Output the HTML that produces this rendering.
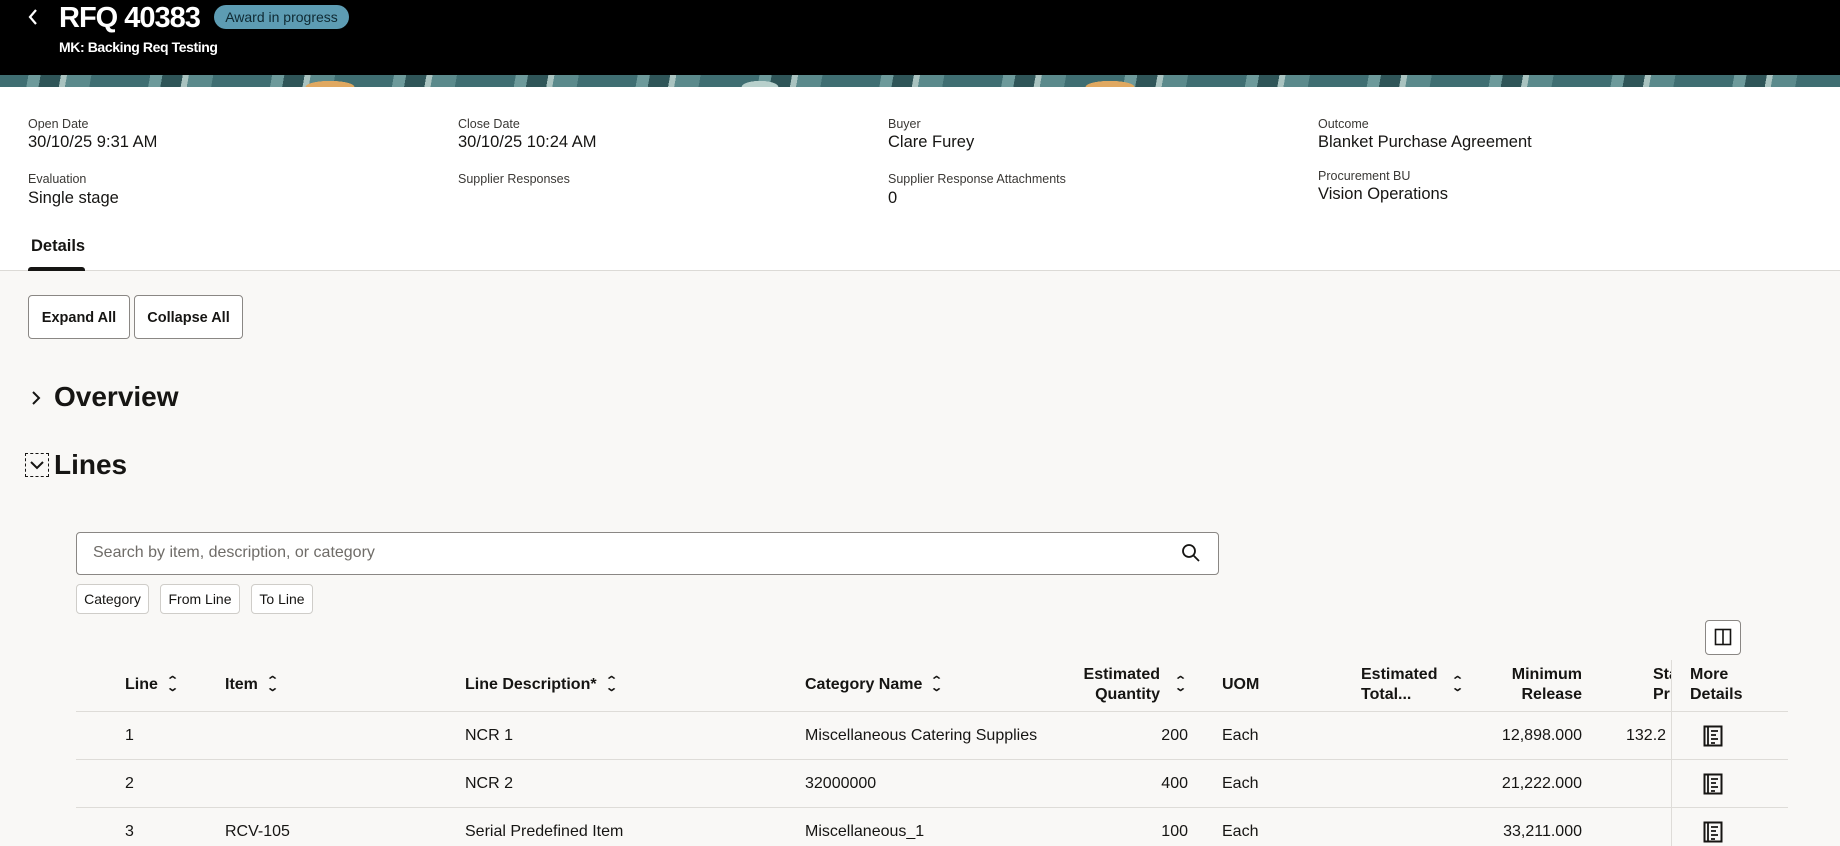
<!DOCTYPE html>
<html><head><meta charset="utf-8"><style>
*{box-sizing:border-box;margin:0;padding:0}
body{width:1840px;height:846px;overflow:hidden;background:#f9f8f6;font-family:"Liberation Sans",sans-serif;color:#161513;position:relative}
.a{position:absolute;white-space:nowrap}
.hdr{position:absolute;left:0;top:0;width:1840px;height:75px;background:#000}
.ban{position:absolute;left:0;top:75px;width:1840px;height:12px;background:
radial-gradient(ellipse 40px 10px at 330px 12px,#e0a860 60%,transparent 62%),
radial-gradient(ellipse 40px 10px at 1110px 12px,#e0a860 60%,transparent 62%),
radial-gradient(ellipse 30px 10px at 760px 12px,#b8d0cc 60%,transparent 62%),
repeating-linear-gradient(100deg,#3f6e72 0 28px,#6d9a9b 28px 40px,#2f5558 40px 60px,#a9c3c0 60px 66px,#5b8a8c 66px 90px,#3f6e72 90px 120px);}
.white{position:absolute;left:0;top:87px;width:1840px;height:184px;background:#fff;border-bottom:1px solid #dcdad6}
.lb{font-size:12.5px;color:#3a3835}
.vl{font-size:16.5px;color:#161513}
.btn{position:absolute;border:1px solid #8a8784;border-radius:4px;background:#fff;font-size:14.5px;font-weight:600;display:flex;align-items:center;justify-content:center;top:295px;height:44px;padding-top:1px}
.chip{position:absolute;top:584px;height:30px;border:1px solid #cfcdc9;border-radius:4px;background:#fff;font-size:14px;display:flex;align-items:center;justify-content:center}
.th{font-size:16px;font-weight:600;line-height:20px}
.td{font-size:16px}
.hl{position:absolute;left:76px;width:1712px;height:1px;background:#dedcd8}
.srt{display:inline-block;font-size:11px;line-height:7px;vertical-align:middle;margin-left:10px;transform:scaleX(1.4)}
</style></head><body>
<div class="hdr"></div>
<svg class="a" style="left:26px;top:8px" width="14" height="18" viewBox="0 0 14 18"><path d="M10 2 L4 9 L10 16" fill="none" stroke="#fff" stroke-width="2.2"/></svg>
<div class="a" style="left:59px;top:1px;font-size:29px;font-weight:700;color:#fff;line-height:34px;letter-spacing:-1px">RFQ 40383</div>
<div class="a" style="left:214px;top:5px;width:135px;height:24px;border-radius:12px;background:#5d9cb3;color:#0f2a33;font-size:14px;line-height:24px;text-align:center">Award in progress</div>
<div class="a" style="left:59px;top:39px;font-size:14px;font-weight:700;color:#fff;letter-spacing:-0.4px">MK: Backing Req Testing</div>
<div class="ban"></div>
<div class="white"></div>
<div class="a lb" style="left:28px;top:117px">Open Date</div>
<div class="a vl" style="left:28px;top:133px">30/10/25 9:31 AM</div>
<div class="a lb" style="left:458px;top:117px">Close Date</div>
<div class="a vl" style="left:458px;top:133px">30/10/25 10:24 AM</div>
<div class="a lb" style="left:888px;top:117px">Buyer</div>
<div class="a vl" style="left:888px;top:133px">Clare Furey</div>
<div class="a lb" style="left:1318px;top:117px">Outcome</div>
<div class="a vl" style="left:1318px;top:133px">Blanket Purchase Agreement</div>
<div class="a lb" style="left:28px;top:172px">Evaluation</div>
<div class="a vl" style="left:28px;top:189px">Single stage</div>
<div class="a lb" style="left:458px;top:172px">Supplier Responses</div>
<div class="a lb" style="left:888px;top:172px">Supplier Response Attachments</div>
<div class="a vl" style="left:888px;top:189px">0</div>
<div class="a lb" style="left:1318px;top:169px">Procurement BU</div>
<div class="a vl" style="left:1318px;top:185px">Vision Operations</div>
<div class="a" style="left:31px;top:237px;font-size:16.5px;font-weight:600">Details</div>
<div class="a" style="left:28px;top:267px;width:57px;height:4px;background:#161513;border-radius:3px 3px 0 0"></div>
<div class="btn" style="left:28px;width:102px">Expand All</div>
<div class="btn" style="left:134px;width:109px">Collapse All</div>
<svg class="a" style="left:30px;top:390px" width="12" height="16"><path d="M3 2 L9 8 L3 14" fill="none" stroke="#161513" stroke-width="2"/></svg>
<div class="a" style="left:54px;top:381px;font-size:28px;font-weight:700">Overview</div>
<div class="a" style="left:25px;top:453px;width:24px;height:24px;border:1px dashed #161513"></div>
<svg class="a" style="left:29px;top:459px" width="16" height="12"><path d="M2 3 L8 9 L14 3" fill="none" stroke="#161513" stroke-width="2"/></svg>
<div class="a" style="left:54px;top:449px;font-size:28px;font-weight:700">Lines</div>
<div class="a" style="left:76px;top:532px;width:1143px;height:43px;border:1px solid #8a8784;border-radius:4px;background:#fff"></div>
<div class="a" style="left:93px;top:544px;font-size:16px;color:#6f6c68">Search by item, description, or category</div>
<svg class="a" style="left:1181px;top:543px" width="20" height="20"><circle cx="8" cy="8" r="6" fill="none" stroke="#161513" stroke-width="1.8"/><path d="M12.5 12.5 L18 18" stroke="#161513" stroke-width="1.8"/></svg>
<div class="chip" style="left:76px;width:73px">Category</div>
<div class="chip" style="left:160px;width:80px">From Line</div>
<div class="chip" style="left:251px;width:62px">To Line</div>
<div class="a" style="left:1705px;top:620px;width:36px;height:35px;border:1px solid #8a8784;border-radius:4px;background:#fff"></div>
<svg class="a" style="left:1714px;top:628px" width="18" height="18"><rect x="1.5" y="1.5" width="15" height="15" fill="none" stroke="#161513" stroke-width="1.6"/><path d="M9 1.5 V16.5" stroke="#161513" stroke-width="1.6"/></svg>
<div class="a th" style="left:125px;top:675px">Line<span class="srt">⌃<br>⌄</span></div>
<div class="a th" style="left:225px;top:675px">Item<span class="srt">⌃<br>⌄</span></div>
<div class="a th" style="left:465px;top:675px">Line Description*<span class="srt">⌃<br>⌄</span></div>
<div class="a th" style="left:805px;top:675px">Category Name<span class="srt">⌃<br>⌄</span></div>
<div class="a th" style="left:1080px;top:665px;text-align:right;width:80px">Estimated<br>Quantity</div>
<div class="a th" style="left:1166px;top:675px"><span class="srt">⌃<br>⌄</span></div>
<div class="a th" style="left:1222px;top:675px">UOM</div>
<div class="a th" style="left:1361px;top:665px">Estimated<br>Total...</div>
<div class="a th" style="left:1443px;top:675px"><span class="srt">⌃<br>⌄</span></div>
<div class="a th" style="left:1482px;top:665px;text-align:right;width:100px">Minimum<br>Release</div>
<div class="a th" style="left:1653px;top:665px;width:18px;overflow:hidden">Sta<br>Pri</div>
<div class="a th" style="left:1690px;top:665px">More<br>Details</div>
<div class="a" style="left:1671px;top:660px;width:1px;height:186px;background:#dedcd8"></div>
<div class="hl" style="top:711px"></div>
<div class="hl" style="top:759px"></div>
<div class="hl" style="top:807px"></div>
<div class="a td" style="left:125px;top:727px">1</div>
<div class="a td" style="left:465px;top:727px">NCR 1</div>
<div class="a td" style="left:805px;top:727px">Miscellaneous Catering Supplies</div>
<div class="a td" style="left:1100px;top:727px;width:88px;text-align:right">200</div>
<div class="a td" style="left:1222px;top:727px">Each</div>
<div class="a td" style="left:1482px;top:727px;width:100px;text-align:right">12,898.000</div>
<div class="a td" style="left:1626px;top:727px;width:45px;overflow:hidden">132.2</div>
<div class="a td" style="left:125px;top:775px">2</div>
<div class="a td" style="left:465px;top:775px">NCR 2</div>
<div class="a td" style="left:805px;top:775px">32000000</div>
<div class="a td" style="left:1100px;top:775px;width:88px;text-align:right">400</div>
<div class="a td" style="left:1222px;top:775px">Each</div>
<div class="a td" style="left:1482px;top:775px;width:100px;text-align:right">21,222.000</div>
<div class="a td" style="left:125px;top:823px">3</div>
<div class="a td" style="left:225px;top:823px">RCV-105</div>
<div class="a td" style="left:465px;top:823px">Serial Predefined Item</div>
<div class="a td" style="left:805px;top:823px">Miscellaneous_1</div>
<div class="a td" style="left:1100px;top:823px;width:88px;text-align:right">100</div>
<div class="a td" style="left:1222px;top:823px">Each</div>
<div class="a td" style="left:1482px;top:823px;width:100px;text-align:right">33,211.000</div>
<svg class="a" style="left:1703px;top:725px" width="20" height="22"><rect x="1.5" y="1.5" width="17" height="19" fill="none" stroke="#161513" stroke-width="2"/><path d="M5 1.5V20.5M8 6h7M8 10h5M8 14h7M8 18h4" stroke="#161513" stroke-width="1.8"/></svg>
<svg class="a" style="left:1703px;top:773px" width="20" height="22"><rect x="1.5" y="1.5" width="17" height="19" fill="none" stroke="#161513" stroke-width="2"/><path d="M5 1.5V20.5M8 6h7M8 10h5M8 14h7M8 18h4" stroke="#161513" stroke-width="1.8"/></svg>
<svg class="a" style="left:1703px;top:821px" width="20" height="22"><rect x="1.5" y="1.5" width="17" height="19" fill="none" stroke="#161513" stroke-width="2"/><path d="M5 1.5V20.5M8 6h7M8 10h5M8 14h7M8 18h4" stroke="#161513" stroke-width="1.8"/></svg>
</body></html>
